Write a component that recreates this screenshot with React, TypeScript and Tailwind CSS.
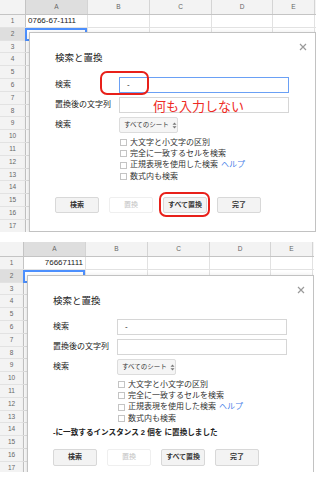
const COLS = ["A", "B", "C", "D", "E"];
const COL_W = ["w-[62px]", "w-[62px]", "w-[62px]", "w-[61px]", "w-[42px]"];
const ROWS = Array.from({ length: 17 }, (_, i) => i + 1);

const FONT = "font-['Liberation_Sans','Noto_Sans_CJK_JP',sans-serif]";

function Grid({ second }: { second?: boolean }) {
  const numW = second ? "w-[24px]" : "w-[26px]";
  return (
    <div>
      <div className="flex h-[15px] border-b border-[#c4c4c4] bg-[#f3f3f3]">
        <div className={`${numW} shrink-0 border-r border-[#c4c4c4]`} />
        {COLS.map((c, i) => (
          <div
            key={c}
            className={`${COL_W[i]} flex shrink-0 items-center justify-center border-r border-[#d4d4d4] text-[6.5px] text-[#666] ${i === 0 ? "bg-[#dedede]" : ""}`}
          >
            {c}
          </div>
        ))}
      </div>
      {ROWS.map((r) => (
        <div key={r} className="flex h-[12.8px] border-b border-[#e2e2e2]">
          <div
            className={`${numW} flex shrink-0 items-center justify-center border-r border-[#c4c4c4] text-[6.5px] text-[#666] ${r === 2 ? "bg-[#dedede]" : "bg-[#f3f3f3]"}`}
          >
            {r}
          </div>
          {COLS.map((c, i) => (
            <div
              key={c}
              className={`${COL_W[i]} flex shrink-0 items-center border-r border-[#e2e2e2] px-[2px] text-[8px] text-[#222] ${second ? "justify-end" : ""}`}
            >
              {r === 1 && i === 0 ? (second ? "766671111" : "0766-67-1111") : ""}
            </div>
          ))}
        </div>
      ))}
      <div
        className={`absolute top-[27.5px] h-[13px] w-[62px] border-2 border-[#4d90fe] ${second ? "left-[23px]" : "left-[25px]"}`}
      />
    </div>
  );
}

function CloseIcon() {
  return (
    <svg width="8" height="8" viewBox="0 0 8 8" className="absolute right-[8px] top-[10px]">
      <path d="M1 1L7 7M7 1L1 7" stroke="#9a9a9a" strokeWidth="1.2" />
    </svg>
  );
}

function SelectArrows() {
  return (
    <svg width="5" height="7" viewBox="0 0 5 7" className="shrink-0">
      <path d="M2.5 0.5L4.5 2.8H0.5Z M2.5 6.5L4.5 4.2H0.5Z" fill="#777" />
    </svg>
  );
}

function Dialog({ second }: { second?: boolean }) {
  const checks = [
    "大文字と小文字の区別",
    "完全に一致するセルを検索",
    "正規表現を使用した検索",
    "数式内も検索",
  ];
  const buttons = [
    { label: "検索", disabled: false },
    { label: "置換", disabled: true },
    { label: "すべて置換", disabled: false },
    { label: "完了", disabled: false },
  ];
  return (
    <div
      className={`absolute right-0 border border-[#c2c2c2] bg-white shadow-[0_2px_6px_rgba(0,0,0,0.18)] ${second ? "left-[27px] top-[33px] bottom-[-6px]" : "left-[29px] top-[32px] bottom-0"}`}
    >
      <CloseIcon />
      <div className="pl-[25px] pt-[19px]">
        <div className="text-[9.5px] leading-[12px] text-[#222]">検索と置換</div>
        <div className={`flex flex-col gap-[4px] ${second ? "mt-[12px]" : "mt-[13px]"}`}>
          <div className="flex items-center">
            <div className="w-[64px] text-[8px] text-[#222]">検索</div>
            <div
              className={`flex h-[16px] w-[170px] items-center border px-[7px] text-[8px] text-[#222] ${second ? "border-[#d6d6d6]" : "border-[#6aa0f5]"}`}
            >
              -
            </div>
          </div>
          <div className="flex items-center">
            <div className="w-[64px] text-[8px] text-[#222]">置換後の文字列</div>
            <div className="h-[16px] w-[170px] border border-[#d6d6d6]" />
          </div>
          <div className="flex items-center">
            <div className="w-[64px] text-[8px] text-[#222]">検索</div>
            <div className="flex h-[16px] w-[59px] items-center justify-between gap-[3px] whitespace-nowrap rounded-[2px] border border-[#dcdcdc] bg-[#f5f5f5] px-[4px] text-[6.5px] text-[#333]">
              <span>すべてのシート</span>
              <SelectArrows />
            </div>
          </div>
        </div>
        <div className="ml-[65px] mt-[4px] flex flex-col">
          {checks.map((t, i) => (
            <div key={t} className="flex h-[11.3px] items-center gap-[3px] whitespace-nowrap text-[8px] text-[#333]">
              <div className="h-[7px] w-[7px] shrink-0 border border-[#c4c4c4] bg-white" />
              <span>
                {t}
                {i === 2 && <span className="ml-[3px] text-[#4a80e8]">ヘルプ</span>}
              </span>
            </div>
          ))}
        </div>
        {second && (
          <div className="mt-[3px] whitespace-nowrap text-[7.6px] font-bold leading-[11px] text-[#222]">
            -に一致するインスタンス 2 個を に置換しました
          </div>
        )}
        <div className={`flex gap-[10px] ${second ? "mt-[11px]" : "mt-[15px]"}`}>
          {buttons.map((b) => (
            <div
              key={b.label}
              className={`flex w-[44px] items-center justify-center whitespace-nowrap rounded-[2px] border text-[7px] ${second ? "h-[17px]" : "h-[16px]"} ${b.disabled ? "border-[#efefef] bg-white text-[#c4c4c4]" : "border-[#d8d8d8] bg-[#f3f3f3] font-bold text-[#333]"}`}
            >
              {b.label}
            </div>
          ))}
        </div>
      </div>
      {!second && (
        <>
          <div className="absolute left-[70px] top-[38px] h-[24px] w-[49px] rounded-[7px] border-[2.5px] border-[#e8201a]" />
          <div className="absolute left-[123px] top-[65px] whitespace-nowrap text-[13px] leading-[17px] text-[#ee2a24]">
            何も入力しない
          </div>
          <div className="absolute left-[129px] top-[159px] h-[25px] w-[51px] rounded-[7px] border-[2.5px] border-[#e8201a]" />
        </>
      )}
    </div>
  );
}

function Shot({ second }: { second?: boolean }) {
  return (
    <div
      className={`relative overflow-hidden ${second ? "h-[230px] w-[314px]" : "h-[232px] w-[316px]"}`}
    >
      <Grid second={second} />
      <Dialog second={second} />
    </div>
  );
}

export default function App() {
  return (
    <div className={`h-[488px] w-[320px] overflow-hidden bg-white ${FONT}`}>
      <Shot />
      <div className="mt-[10px]">
        <Shot second />
      </div>
    </div>
  );
}
